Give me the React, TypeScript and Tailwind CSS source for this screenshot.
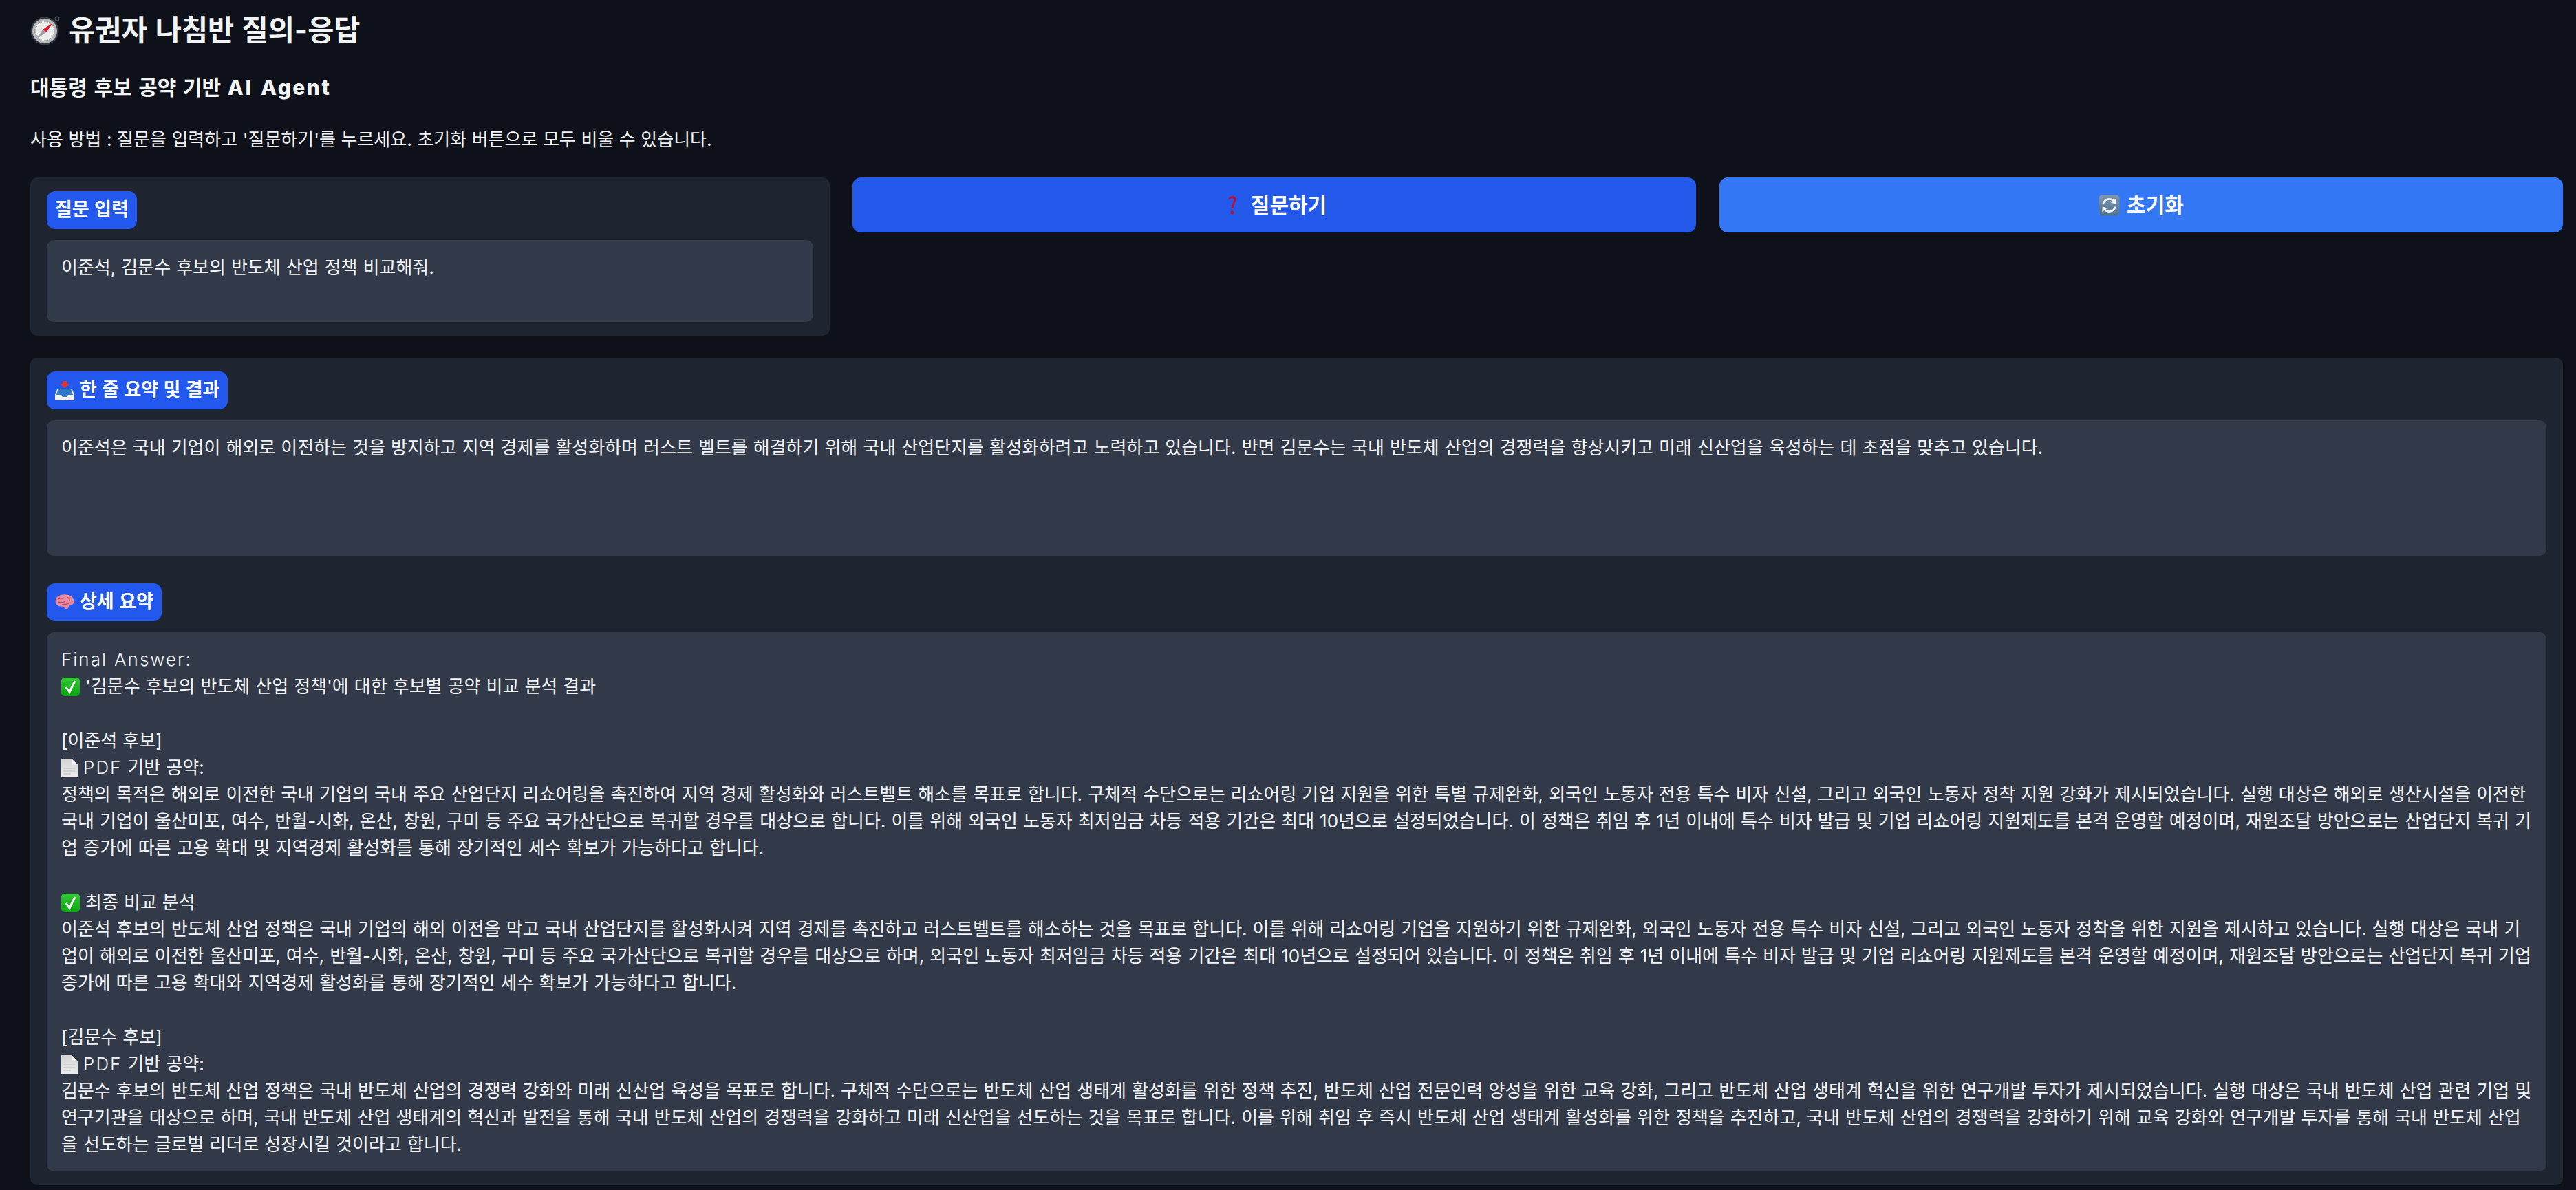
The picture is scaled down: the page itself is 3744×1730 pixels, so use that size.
const CompassIcon = () => (
  <svg viewBox="0 0 44 44" className="w-[44px] h-[44px] shrink-0">
    <circle cx="39" cy="5" r="3" fill="none" stroke="#4b5563" strokeWidth="1.2" />
    <circle cx="21" cy="23" r="20.5" fill="#333b49" />
    <circle cx="21" cy="23" r="18" fill="#b9b9b9" />
    <circle cx="21" cy="23" r="14" fill="#ececec" stroke="#a0a0a0" strokeDasharray="1 1.4" strokeWidth="2" />
    <polygon points="33,11 18,21 23,25" fill="#e8192c" />
    <polygon points="9,35 18,21 23,25" fill="#9fa3a8" />
  </svg>
)

const QuestionIcon = () => (
  <svg viewBox="0 0 30 28" className="w-[30px] h-[28px] shrink-0">
    <path d="M11 6 C11 2 19 1 19 6 C19 10 15 12 15 19" fill="none" stroke="#d9001b" strokeWidth="2.6" />
    <circle cx="15" cy="25" r="2.4" fill="#d9001b" />
  </svg>
)

const RefreshIcon = () => (
  <svg viewBox="0 0 32 32" className="w-[31px] h-[31px] shrink-0">
    <defs>
      <linearGradient id="refreshFill" x1="0" y1="0" x2="0" y2="1">
        <stop offset="0" stopColor="#7d97ae" />
        <stop offset="1" stopColor="#4f7090" />
      </linearGradient>
    </defs>
    <rect x="0.5" y="0.5" width="31" height="31" rx="5" fill="url(#refreshFill)" />
    <path d="M7 14 A9.5 9.5 0 0 1 23 9.5" fill="none" stroke="#f4f6f8" strokeWidth="2.8" />
    <polygon points="26.5,6 26,14 18.5,12" fill="#f4f6f8" />
    <path d="M25 18 A9.5 9.5 0 0 1 9 22.5" fill="none" stroke="#f4f6f8" strokeWidth="2.8" />
    <polygon points="5.5,26 6,18 13.5,20" fill="#f4f6f8" />
  </svg>
)

const InboxIcon = () => (
  <svg viewBox="0 0 28 28" className="w-[28px] h-[28px] shrink-0">
    <polygon points="3,12 25,12 28,20 28,28 0,28 0,20" fill="#eef0f2" />
    <polygon points="5,11 23,11 26,20 19,20 17,23 11,23 9,20 2,20" fill="#2f78c8" />
    <polygon points="11,0 17,0 17,4 21,4 14,10 7,4 11,4" fill="#e8302c" />
  </svg>
)

const BrainIcon = () => (
  <svg viewBox="0 0 28 23" className="w-[28px] h-[23px] shrink-0">
    <path d="M12 0.5 C18 -0.5 27 2 27.5 10 C28 14 24 16 20 16 C20 20 18 22.5 15 21 C13 19 13 18 11 17.5 C6 18.5 0 15 0.5 9 C1 4 6 1 12 0.5 Z" fill="#e98aa0" />
    <path d="M5 7 C8 4 10 8 13 5 M4 12 C8 9 11 14 15 10 M17 4 C20 5 22 7 21 10 M10 15 C13 13 16 16 20 13" fill="none" stroke="#b5546d" strokeWidth="1.3" />
  </svg>
)

const CheckIcon = () => (
  <svg viewBox="0 0 27 27" className="w-[27px] h-[27px] shrink-0 inline-block align-[-5px]">
    <defs>
      <linearGradient id="checkFill" x1="0" y1="0" x2="0" y2="1">
        <stop offset="0" stopColor="#35c935" />
        <stop offset="1" stopColor="#08a510" />
      </linearGradient>
    </defs>
    <rect width="27" height="27" rx="5" fill="url(#checkFill)" />
    <path d="M7 14 L12 21 L20 5" fill="none" stroke="#ffffff" strokeWidth="3" />
  </svg>
)

const DocIcon = () => (
  <svg viewBox="0 0 24 27" className="w-[24px] h-[27px] shrink-0 inline-block align-[-5px]">
    <defs>
      <linearGradient id="docFill" x1="0" y1="0" x2="0" y2="1">
        <stop offset="0" stopColor="#d4d4d4" />
        <stop offset="1" stopColor="#ececec" />
      </linearGradient>
    </defs>
    <polygon points="0,0 15,0 24,9 24,27 0,27" fill="url(#docFill)" />
    <polygon points="15,0 24,9 15,9" fill="#f5f5f5" />
    <path d="M3 14 H20 M3 18 H20 M3 22 H14" stroke="#bdbdbd" strokeWidth="1" />
  </svg>
)

const Latin = ({ children }: { children: React.ReactNode }) => (
  <span className="tracking-[2px] font-light">{children}</span>
)

const SectionLabel = ({ icon, text }: { icon?: React.ReactNode; text: string }) => (
  <div className="h-[55px] w-fit flex items-center gap-[8px] px-[12px] rounded-[12px] bg-[#2258ed] text-white text-[27px] font-bold [word-spacing:1px]">
    {icon}
    <span>{text}</span>
  </div>
)

const detailLines: React.ReactNode[] = [
  <Latin>Final Answer:</Latin>,
  <><CheckIcon /> '김문수 후보의 반도체 산업 정책'에 대한 후보별 공약 비교 분석 결과</>,
  '',
  '[이준석 후보]',
  <><DocIcon /> <Latin>PDF</Latin> 기반 공약:</>,
  '정책의 목적은 해외로 이전한 국내 기업의 국내 주요 산업단지 리쇼어링을 촉진하여 지역 경제 활성화와 러스트벨트 해소를 목표로 합니다. 구체적 수단으로는 리쇼어링 기업 지원을 위한 특별 규제완화, 외국인 노동자 전용 특수 비자 신설, 그리고 외국인 노동자 정착 지원 강화가 제시되었습니다. 실행 대상은 해외로 생산시설을 이전한',
  '국내 기업이 울산미포, 여수, 반월-시화, 온산, 창원, 구미 등 주요 국가산단으로 복귀할 경우를 대상으로 합니다. 이를 위해 외국인 노동자 최저임금 차등 적용 기간은 최대 10년으로 설정되었습니다. 이 정책은 취임 후 1년 이내에 특수 비자 발급 및 기업 리쇼어링 지원제도를 본격 운영할 예정이며, 재원조달 방안으로는 산업단지 복귀 기',
  '업 증가에 따른 고용 확대 및 지역경제 활성화를 통해 장기적인 세수 확보가 가능하다고 합니다.',
  '',
  <><CheckIcon /> 최종 비교 분석</>,
  '이준석 후보의 반도체 산업 정책은 국내 기업의 해외 이전을 막고 국내 산업단지를 활성화시켜 지역 경제를 촉진하고 러스트벨트를 해소하는 것을 목표로 합니다. 이를 위해 리쇼어링 기업을 지원하기 위한 규제완화, 외국인 노동자 전용 특수 비자 신설, 그리고 외국인 노동자 정착을 위한 지원을 제시하고 있습니다. 실행 대상은 국내 기',
  '업이 해외로 이전한 울산미포, 여수, 반월-시화, 온산, 창원, 구미 등 주요 국가산단으로 복귀할 경우를 대상으로 하며, 외국인 노동자 최저임금 차등 적용 기간은 최대 10년으로 설정되어 있습니다. 이 정책은 취임 후 1년 이내에 특수 비자 발급 및 기업 리쇼어링 지원제도를 본격 운영할 예정이며, 재원조달 방안으로는 산업단지 복귀 기업',
  '증가에 따른 고용 확대와 지역경제 활성화를 통해 장기적인 세수 확보가 가능하다고 합니다.',
  '',
  '[김문수 후보]',
  <><DocIcon /> <Latin>PDF</Latin> 기반 공약:</>,
  '김문수 후보의 반도체 산업 정책은 국내 반도체 산업의 경쟁력 강화와 미래 신산업 육성을 목표로 합니다. 구체적 수단으로는 반도체 산업 생태계 활성화를 위한 정책 추진, 반도체 산업 전문인력 양성을 위한 교육 강화, 그리고 반도체 산업 생태계 혁신을 위한 연구개발 투자가 제시되었습니다. 실행 대상은 국내 반도체 산업 관련 기업 및',
  '연구기관을 대상으로 하며, 국내 반도체 산업 생태계의 혁신과 발전을 통해 국내 반도체 산업의 경쟁력을 강화하고 미래 신산업을 선도하는 것을 목표로 합니다. 이를 위해 취임 후 즉시 반도체 산업 생태계 활성화를 위한 정책을 추진하고, 국내 반도체 산업의 경쟁력을 강화하기 위해 교육 강화와 연구개발 투자를 통해 국내 반도체 산업',
  '을 선도하는 글로벌 리더로 성장시킬 것이라고 합니다.',
]

export default function App() {
  return (
    <div className="min-h-screen bg-[#0e1119] text-[#f3f4f6] pl-[44px] pr-[19px] font-['Inter','Noto_Sans_CJK_KR',sans-serif] overflow-hidden [word-spacing:0.75px]">
      <h1 className="pt-4 flex items-center gap-[12px] text-[41.5px] leading-[56px] font-semibold">
        <CompassIcon />
        <span>유권자 나침반 질의-응답</span>
      </h1>
      <h2 className="mt-[35px] text-[30px] leading-[40px] font-bold [word-spacing:2.5px]">
        대통령 후보 공약 기반 <span className="tracking-[2.5px] font-extrabold">AI Agent</span>
      </h2>
      <p className="mt-[36px] text-[26px] leading-[40px] [word-spacing:0.3px]">
        사용 방법 : 질문을 입력하고 '질문하기'를 누르세요. 초기화 버튼으로 모두 비울 수 있습니다.
      </p>

      <div className="mt-[35px] flex items-start gap-[33px]">
        <div className="w-[1162px] shrink-0 rounded-[10px] bg-[#1e2530] px-[24px] pt-[20px] pb-[20px]">
          <SectionLabel text="질문 입력" />
          <div className="mt-[16px] h-[119px] rounded-[10px] bg-[#323a49] px-[21px] py-[20px] text-[26px] leading-[39px]">
            이준석, 김문수 후보의 반도체 산업 정책 비교해줘.
          </div>
        </div>
        <div className="flex-1 flex gap-[34px]">
          <button className="flex-1 h-[80px] flex items-center justify-center gap-[12px] rounded-[12px] bg-[#2259ea] text-white text-[30px] font-semibold">
            <QuestionIcon />
            <span>질문하기</span>
          </button>
          <button className="flex-1 h-[80px] flex items-center justify-center gap-[10px] rounded-[12px] bg-[#3477f5] text-white text-[30px] font-semibold">
            <RefreshIcon />
            <span>초기화</span>
          </button>
        </div>
      </div>

      <div className="mt-[32px] rounded-[10px] bg-[#1e2530] px-[24px] py-[20px]">
        <SectionLabel icon={<InboxIcon />} text="한 줄 요약 및 결과" />
        <div className="mt-[16px] h-[197px] rounded-[10px] bg-[#323a49] px-[21px] py-[20px] text-[26px] leading-[39px] whitespace-nowrap">
          이준석은 국내 기업이 해외로 이전하는 것을 방지하고 지역 경제를 활성화하며 러스트 벨트를 해결하기 위해 국내 산업단지를 활성화하려고 노력하고 있습니다. 반면 김문수는 국내 반도체 산업의 경쟁력을 향상시키고 미래 신산업을 육성하는 데 초점을 맞추고 있습니다.
        </div>

        <div className="mt-[40px]">
          <SectionLabel icon={<BrainIcon />} text="상세 요약" />
        </div>
        <div className="mt-[16px] h-[784px] rounded-[10px] bg-[#323a49] px-[21px] py-[20px] text-[26px] leading-[39.2px] whitespace-nowrap">
          {detailLines.map((line, i) => (
            <div key={i} className="h-[39.2px]">{line}</div>
          ))}
        </div>
      </div>
    </div>
  )
}
